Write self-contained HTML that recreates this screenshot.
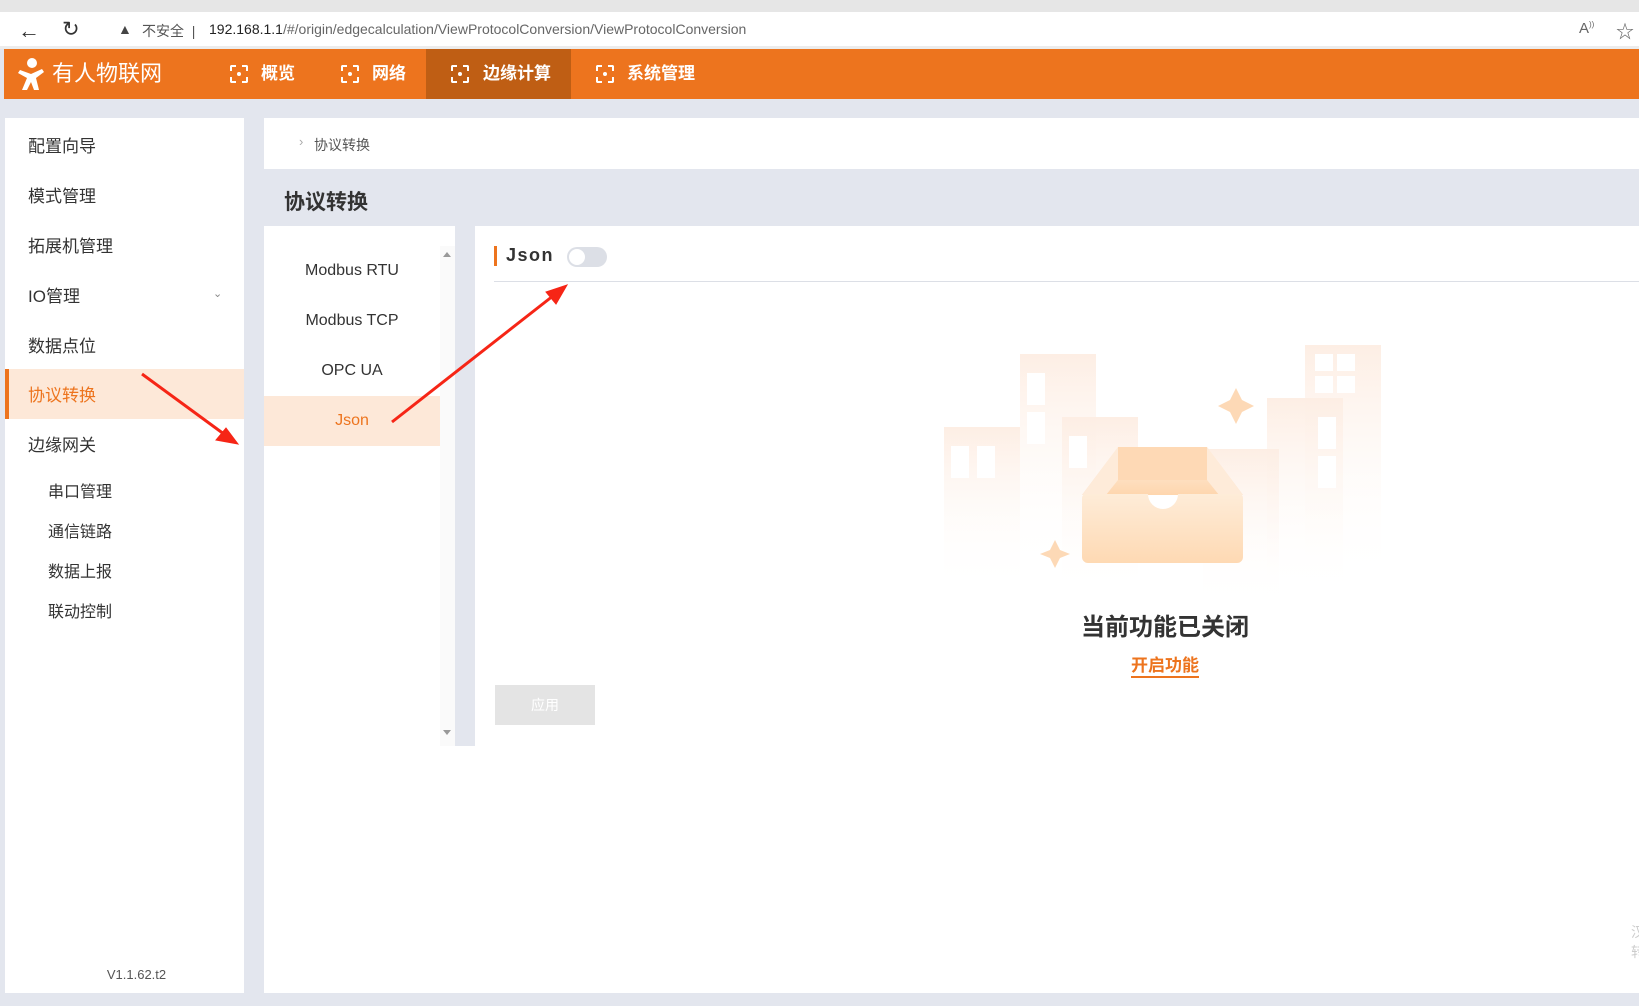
<!DOCTYPE html>
<html><head><meta charset="utf-8"><style>
*{margin:0;padding:0;box-sizing:border-box}
body{width:1639px;height:1006px;overflow:hidden;background:#e3e6ee;font-family:"Liberation Sans","Noto Sans CJK SC",sans-serif;position:relative;color:#333}
.abs{position:absolute}
#tabs{left:0;top:0;width:1639px;height:12px;background:#e6e6e6}
#addr{left:0;top:12px;width:1639px;height:37px;background:#fff;border-bottom:3px solid #ececec}
#hdr{left:4px;top:49px;width:1635px;height:50px;background:#ed741e}
.nav{position:absolute;top:0;height:50px;line-height:50px;color:#fff;font-weight:bold;font-size:17px}
.ic{position:absolute;top:16px;width:18px;height:18px;border:2px dashed #fff;border-radius:2px}
.ic:after{content:"";position:absolute;left:5px;top:5px;width:4px;height:4px;background:#fff;border-radius:50%}
#side{left:5px;top:118px;width:239px;height:875px;background:#fff}
.mi{position:absolute;left:0;width:239px;height:50px;line-height:54px;padding-left:23px;font-size:17px;color:#333}
.sub{position:absolute;left:43px;font-size:16px;color:#333}
</style></head><body>
<div class="abs" id="tabs"></div>
<div class="abs" id="addr">
 <div class="abs" style="left:18px;top:6px;font-size:22px;color:#333">&#8592;</div>
 <div class="abs" style="left:62px;top:5px;font-size:21px;color:#333">&#8635;</div>
 <div class="abs" style="left:100px;top:2px;width:1539px;height:32px;background:#fff;border-radius:16px"></div>
 <div class="abs" style="left:118px;top:9px;font-size:14px;color:#444">&#9650;</div>
 <div class="abs" style="left:142px;top:9px;font-size:14px;color:#555">不安全 &nbsp;|</div>
 <div class="abs" style="left:209px;top:9px;font-size:14px;color:#222">192.168.1.1<span style="color:#666">/#/origin/edgecalculation/ViewProtocolConversion/ViewProtocolConversion</span></div>
 <div class="abs" style="left:1579px;top:8px;font-size:15px;color:#666">A<sup style="font-size:8px">))</sup></div>
 <div class="abs" style="left:1616px;top:6px;font-size:18px;color:#666">☆</div>
</div>
<div class="abs" id="hdr">
 <svg class="abs" style="left:14px;top:8px" width="30" height="34" viewBox="0 0 30 34"><circle cx="14" cy="6" r="5" fill="#fff"/><path d="M2 13 L13 17 L24 12 L26 15 L18 21 L21 33 L16 33 L13 25 L9 33 L4 33 L9 21 L0 16 Z" fill="#fff"/></svg>
 <div class="nav" style="left:48px;font-weight:normal;font-size:22px">有人物联网</div>
 <div class="ic" style="left:226px"></div><div class="nav" style="left:257px">概览</div>
 <div class="ic" style="left:337px"></div><div class="nav" style="left:368px">网络</div>
 <div class="abs" style="left:422px;top:0;width:145px;height:50px;background:#bf5e14"></div>
 <div class="ic" style="left:447px"></div><div class="nav" style="left:479px">边缘计算</div>
 <div class="ic" style="left:592px"></div><div class="nav" style="left:623px">系统管理</div>
</div>

<div class="abs" id="side">
 <div class="mi" style="top:2px">配置向导</div>
 <div class="mi" style="top:52px">模式管理</div>
 <div class="mi" style="top:102px">拓展机管理</div>
 <div class="mi" style="top:152px">IO管理<span class="abs" style="left:208px;top:-3px;font-size:11px;color:#888">&#8964;</span></div>
 <div class="mi" style="top:202px">数据点位</div>
 <div class="mi" style="top:251px;background:#fde8d8;color:#ed741e;border-left:4px solid #ed741e;padding-left:19px">协议转换</div>
 <div class="mi" style="top:301px">边缘网关</div>
 <div class="sub" style="top:360px">串口管理</div>
 <div class="sub" style="top:400px">通信链路</div>
 <div class="sub" style="top:440px">数据上报</div>
 <div class="sub" style="top:480px">联动控制</div>
 <div class="abs" style="left:12px;width:239px;top:849px;text-align:center;font-size:13px;color:#555">V1.1.62.t2</div>
</div>

<div class="abs" style="left:264px;top:118px;width:1375px;height:51px;background:#fff">
 <span class="abs" style="left:35px;top:16px;font-size:13px;color:#aaa">›</span>
 <span class="abs" style="left:50px;top:17px;font-size:14px;color:#555">协议转换</span>
</div>
<div class="abs" style="left:284px;top:186px;font-size:21px;font-weight:bold;color:#333">协议转换</div>

<div class="abs" style="left:264px;top:226px;width:1375px;height:767px;background:#fff"></div>
<div class="abs" style="left:455px;top:226px;width:20px;height:520px;background:#e3e6ee"></div>
<div class="abs" style="left:440px;top:246px;width:15px;height:500px;background:#fafafa"></div>
<div class="abs" style="left:443px;top:252px;width:0;height:0;border:4px solid transparent;border-bottom:5px solid #999;border-top:0"></div>
<div class="abs" style="left:443px;top:730px;width:0;height:0;border:4px solid transparent;border-top:5px solid #999;border-bottom:0"></div>
<div class="abs" style="left:264px;top:396px;width:176px;height:50px;background:#fde8d8"></div>
<div class="abs" style="left:264px;top:262px;width:176px;text-align:center;font-size:16px;color:#333">Modbus RTU</div>
<div class="abs" style="left:264px;top:312px;width:176px;text-align:center;font-size:16px;color:#333">Modbus TCP</div>
<div class="abs" style="left:264px;top:362px;width:176px;text-align:center;font-size:16px;color:#333">OPC UA</div>
<div class="abs" style="left:264px;top:412px;width:176px;text-align:center;font-size:16px;color:#ed741e">Json</div>

<div class="abs" style="left:494px;top:246px;width:3px;height:20px;background:#ed741e"></div>
<div class="abs" style="left:506px;top:245px;font-size:18px;font-weight:bold;color:#333;letter-spacing:1.5px">Json</div>
<div class="abs" style="left:567px;top:247px;width:40px;height:20px;border-radius:10px;background:#dcdfe6"></div>
<div class="abs" style="left:569px;top:249px;width:16px;height:16px;border-radius:50%;background:#fff"></div>
<div class="abs" style="left:494px;top:281px;width:1145px;height:1px;background:#dcdfe6"></div>

<svg class="abs" style="left:0;top:0" width="1639" height="1006">
<defs>
<linearGradient id="b" x1="0" y1="0" x2="0" y2="1"><stop offset="0" stop-color="#fdeee4"/><stop offset="1" stop-color="#fff" stop-opacity="0"/></linearGradient>
<linearGradient id="bx" x1="0" y1="0" x2="0" y2="1"><stop offset="0" stop-color="#feecd8"/><stop offset="1" stop-color="#fed9b3"/></linearGradient>
<linearGradient id="bt" x1="0" y1="0" x2="0" y2="1"><stop offset="0" stop-color="#fff1e3"/><stop offset="1" stop-color="#fed6ae"/></linearGradient>
</defs>
<rect x="1305" y="345" width="76" height="240" fill="url(#b)"/>
<rect x="1267" y="398" width="76" height="200" fill="url(#b)"/>
<rect x="1020" y="354" width="76" height="220" fill="url(#b)"/>
<rect x="944" y="427" width="76" height="165" fill="url(#b)"/>
<rect x="1062" y="417" width="76" height="180" fill="url(#b)"/>
<rect x="1203" y="449" width="76" height="160" fill="url(#b)"/>
<g fill="#fff"><rect x="951" y="446" width="18" height="32"/><rect x="977" y="446" width="18" height="32"/><rect x="1027" y="373" width="18" height="32"/><rect x="1027" y="412" width="18" height="32"/><rect x="1069" y="436" width="18" height="32"/><rect x="1315" y="354" width="18" height="17"/><rect x="1337" y="354" width="18" height="17"/><rect x="1315" y="376" width="18" height="17"/><rect x="1337" y="376" width="18" height="17"/><rect x="1318" y="417" width="18" height="32"/><rect x="1318" y="456" width="18" height="32"/></g>
<path d="M1118 447 L1207 447 L1243 495 L1082 495 Z" fill="url(#bt)"/>
<rect x="1118" y="447" width="89" height="33" fill="#fed9b5"/>
<path d="M1082 495 L1118 447 L1118 480 L1106 495 Z" fill="#feebd9"/>
<path d="M1243 495 L1207 447 L1207 480 L1219 495 Z" fill="#feebd9"/>
<path d="M1082 498 a4 4 0 0 1 4 -4 L1148 494 a15 15 0 0 0 30 0 L1239 494 a4 4 0 0 1 4 4 L1243 557 a6 6 0 0 1 -6 6 L1088 563 a6 6 0 0 1 -6 -6 Z" fill="url(#bx)"/>
<path d="M1236 388 L1242 400 L1254 406 L1242 412 L1236 424 L1230 412 L1218 406 L1230 400 Z" fill="#fdd9b6"/>
<path d="M1055 540 L1060 550 L1070 554 L1060 558 L1055 568 L1050 558 L1040 554 L1050 550 Z" fill="#fdd9b6"/>
<g fill="#f62516" stroke="#f62516" stroke-width="3"><line x1="142" y1="374" x2="228" y2="437"/><path d="M238 444 L216 440 L226 428 Z" stroke-width="1"/>
<line x1="392" y1="422" x2="558" y2="292"/><path d="M567 285 L556 304 L546 292 Z" stroke-width="1"/></g>
</svg>

<div class="abs" style="left:1000px;top:607px;width:330px;text-align:center;font-size:24px;font-weight:bold;color:#333">当前功能已关闭</div>
<div class="abs" style="left:1000px;top:651px;width:330px;text-align:center;font-size:17px;font-weight:bold;color:#ed741e"><span style="border-bottom:2px solid #ed741e;padding-bottom:1px">开启功能</span></div>
<div class="abs" style="left:495px;top:685px;width:100px;height:40px;background:#e4e4e4;color:#fff;text-align:center;line-height:40px;font-size:14px">应用</div>
<div class="abs" style="left:1631px;top:922px;font-size:14px;color:#ccc;line-height:20px">汉<br>转</div>
</body></html>
